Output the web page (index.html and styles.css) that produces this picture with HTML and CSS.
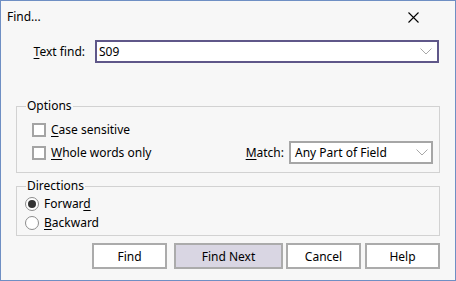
FILE: index.html
```html
<!DOCTYPE html>
<html lang="en">

<head>
    <meta charset="utf-8">
    <meta name="viewport" content="width=device-width, initial-scale=1.0">
    <title>Find...</title>
    <link rel="stylesheet" href="styles.css">
</head>

<body>
    <div class="dialog">
        <div class="titlebar">
            <span class="title">Find...</span>
            <svg class="close" width="11" height="11" viewBox="0 0 11 11">
                <path d="M0.5 0.5 L10.5 10.5 M10.5 0.5 L0.5 10.5" stroke="#000" stroke-width="1.1" fill="none" />
            </svg>
        </div>

        <div class="findrow">
            <label class="findlabel"><u>T</u>ext find:</label>
            <div class="combo textcombo">
                <span>S09</span>
                <svg class="chev" width="12" height="7" viewBox="0 0 12 7">
                    <path d="M0.5 0.5 L6 6 L11.5 0.5" stroke="#a8a8a8" fill="none" />
                </svg>
            </div>
        </div>

        <fieldset class="group options">
            <legend>Options</legend>
            <div class="row first">
                <span class="check"></span>
                <span class="cblabel"><u>C</u>ase sensitive</span>
            </div>
            <div class="row second">
                <span class="check"></span>
                <span class="cblabel"><u>W</u>hole words only</span>
                <span class="matchlabel"><u>M</u>atch:</span>
                <div class="combo matchcombo">
                    <span>Any Part of Field</span>
                    <svg class="chev" width="12" height="7" viewBox="0 0 12 7">
                        <path d="M0.5 0.5 L6 6 L11.5 0.5" stroke="#a8a8a8" fill="none" />
                    </svg>
                </div>
            </div>
        </fieldset>

        <fieldset class="group directions">
            <legend>Directions</legend>
            <div class="radiorow">
                <span class="radio on"></span>
                <span class="rlabel">Forwar<u>d</u></span>
            </div>
            <div class="radiorow">
                <span class="radio"></span>
                <span class="rlabel"><u>B</u>ackward</span>
            </div>
        </fieldset>

        <div class="buttons">
            <button class="btn b-find">Find</button>
            <button class="btn b-next">Find Next</button>
            <button class="btn b-cancel">Cancel</button>
            <button class="btn b-help">Help</button>
        </div>
    </div>
</body>

</html>
```

FILE: styles.css
```css
body {
    margin: 0;
    font-family: "Noto Sans", "Open Sans", sans-serif;
    font-size: 12px;
    color: #000;
}

.dialog {
    width: 456px;
    height: 281px;
    box-sizing: border-box;
    border: 1px solid #6f8fc4;
    background-color: #f7f7f7;
    display: flex;
    flex-direction: column;
}

u {
    text-decoration: underline;
    text-underline-offset: 2px;
}

.titlebar {
    height: 32px;
    display: flex;
    align-items: center;
    justify-content: space-between;
    padding: 0 36px 0 6px;
}

.title {
    font-size: 12px;
    line-height: 16px;
}

.findrow {
    display: flex;
    align-items: center;
    margin-top: 7px;
    padding-right: 16px;
}

.findlabel {
    width: 84px;
    text-align: right;
    margin-right: 10px;
    line-height: 16px;
}

.combo {
    box-sizing: border-box;
    height: 23px;
    background-color: #fff;
    display: flex;
    align-items: center;
    justify-content: space-between;
    line-height: 16px;
}

.textcombo {
    flex: 1;
    border: 2px solid #5f5789;
    padding: 0 5px 0 2px;
}

.matchcombo {
    width: 144px;
    border: 2px solid #a6a6a6;
    padding: 0 3px 0 4px;
    margin-right: 6px;
}

.group {
    margin: 0 15px;
    border: 1px solid #d2d2d2;
    padding: 0 0 0 9px;
    min-width: 0;
}

.group legend {
    padding: 0 1px;
    line-height: 16px;
    font-size: 12px;
}

.options {
    margin-top: 35px;
    padding-bottom: 8px;
}

.row {
    display: flex;
    align-items: center;
    margin-left: 6px;
}

.row.first {
    margin-top: 7px;
    height: 18px;
}

.row.second {
    margin-top: 2px;
    height: 23px;
}

.check {
    width: 14px;
    height: 14px;
    box-sizing: border-box;
    border: 2px solid #a4a4a4;
    background-color: #fff;
    margin-right: 5px;
}

.cblabel {
    line-height: 16px;
}

.matchlabel {
    margin-left: auto;
    margin-right: 5px;
    line-height: 16px;
}

.directions {
    margin-top: 5px;
    padding-bottom: 3px;
}

.radiorow {
    display: flex;
    align-items: center;
    height: 18px;
    margin-left: -1px;
    margin-top: 1px;
}

.radiorow:first-of-type {
    margin-top: 1px;
}

.radio {
    width: 14px;
    height: 14px;
    box-sizing: border-box;
    border: 1px solid #8c8c8c;
    border-radius: 50%;
    background-color: #fff;
    margin-right: 5px;
    display: flex;
    align-items: center;
    justify-content: center;
}

.radio.on::after {
    content: "";
    width: 8px;
    height: 8px;
    border-radius: 50%;
    background-color: #333;
}

.rlabel {
    line-height: 16px;
}

.buttons {
    display: flex;
    justify-content: flex-end;
    margin-top: 7px;
    padding-right: 15px;
}

.btn {
    box-sizing: border-box;
    height: 26px;
    border: 2px solid #ababab;
    background-color: #fff;
    font-family: "Noto Sans", "Open Sans", sans-serif;
    font-size: 12px;
    color: #000;
    padding: 0;
}

.b-find {
    width: 75px;
}

.b-next {
    width: 109px;
    margin-left: 7px;
    background-color: #d9d6e3;
}

.b-cancel {
    width: 75px;
    margin-left: 3px;
}

.b-help {
    width: 75px;
    margin-left: 4px;
}
```
